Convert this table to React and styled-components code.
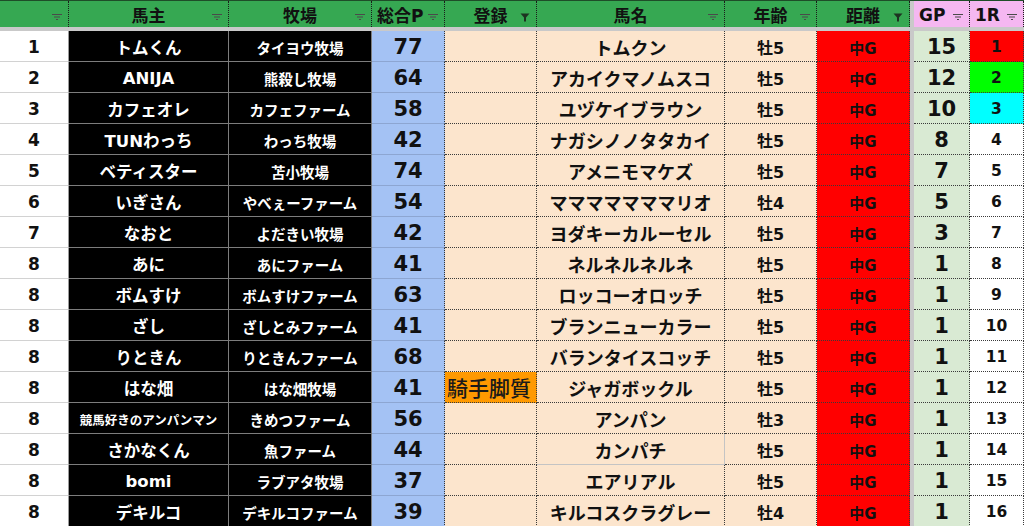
import React from "react";
import styled, { createGlobalStyle } from "styled-components";

const GlobalStyle = createGlobalStyle`
  html, body {
    margin: 0;
    padding: 0;
    background: #ffffff;
  }
  body {
    font-family: "DejaVu Sans", "Noto Sans CJK JP", sans-serif;
    overflow: hidden;
  }
`;

const COLS = "69px 160px 143px 73px 92px 188px 92px 93px 4px 56px 54px";

const rows = [
  ["1", "トムくん", "タイヨウ牧場", 77, "", "トムクン", "牡5", 15, 1, "#ff0000"],
  ["2", "ANIJA", "熊殺し牧場", 64, "", "アカイクマノムスコ", "牡5", 12, 2, "#00ff00"],
  ["3", "カフェオレ", "カフェファーム", 58, "", "ユヅケイブラウン", "牡5", 10, 3, "#00ffff"],
  ["4", "TUNわっち", "わっち牧場", 42, "", "ナガシノノタタカイ", "牡5", 8, 4],
  ["5", "ベティスター", "苫小牧場", 74, "", "アメニモマケズ", "牡5", 7, 5],
  ["6", "いぎさん", "やべぇーファーム", 54, "", "マママママママリオ", "牡4", 5, 6],
  ["7", "なおと", "よだきい牧場", 42, "", "ヨダキーカルーセル", "牡5", 3, 7],
  ["8", "あに", "あにファーム", 41, "", "ネルネルネルネ", "牡5", 1, 8],
  ["8", "ボムすけ", "ボムすけファーム", 63, "", "ロッコーオロッチ", "牡5", 1, 9],
  ["8", "ざし", "ざしとみファーム", 41, "", "ブランニューカラー", "牡5", 1, 10],
  ["8", "りときん", "りときんファーム", 68, "", "バランタイスコッチ", "牡5", 1, 11],
  ["8", "はな畑", "はな畑牧場", 41, "騎手脚質", "ジャガボックル", "牡5", 1, 12],
  ["8", "競馬好きのアンパンマン", "きめつファーム", 56, "", "アンパン", "牡3", 1, 13],
  ["8", "さかなくん", "魚ファーム", 44, "", "カンパチ", "牡5", 1, 14],
  ["8", "bomi", "ラブアタ牧場", 37, "", "エアリアル", "牡5", 1, 15],
  ["8", "デキルコ", "デキルコファーム", 39, "", "キルコスクラグレー", "牡4", 1, 16],
];

// 選択中のセル枠（カンパチの行）
const SELECTED_ROW = 13;

const headers = [
  { label: "", filter: "idle" },
  { label: "馬主", filter: "idle" },
  { label: "牧場", filter: "idle" },
  { label: "総合P", filter: "idle", align: "left" },
  { label: "登録", filter: "on" },
  { label: "馬名", filter: "idle" },
  { label: "年齢", filter: "idle" },
  { label: "距離", filter: "on" },
  { sep: true },
  { label: "GP", filter: "idle", pink: true, align: "left" },
  { label: "1R", filter: "idle", pink: true, align: "left" },
];

const Sheet = styled.div`
  width: 1024px;
  height: 526px;
  overflow: hidden;
  border-top: 1px solid #1e4d28;
  box-sizing: border-box;
`;

const HeaderRow = styled.div`
  display: grid;
  grid-template-columns: ${COLS};
  height: 26px;
  border-bottom: 1px solid #111;
  box-sizing: border-box;
`;

const HeadCell = styled.div`
  position: relative;
  display: flex;
  align-items: center;
  justify-content: ${(p) => (p.$align === "left" ? "flex-start" : "center")};
  padding-left: ${(p) => (p.$align === "left" ? "5px" : "0")};
  padding-top: 1px;
  background: ${(p) => (p.$pink ? "#f5b7f1" : "#36a852")};
  border-right: 1px dotted #1b1b1b;
  font-size: 17px;
  font-weight: bold;
  color: #111;
  box-sizing: border-box;
`;

const FilterIcon = styled.svg`
  position: absolute;
  right: 6px;
  top: 11px;
`;

const Freeze = styled.div`
  height: 4px;
  background: #c9c9c9;
`;

const Row = styled.div`
  display: grid;
  grid-template-columns: ${COLS};
  height: 31px;
`;

const Cell = styled.div`
  display: flex;
  align-items: center;
  justify-content: center;
  padding-top: 2px;
  box-sizing: border-box;
  font-weight: bold;
  white-space: nowrap;
  overflow: hidden;
  color: #111;
  border-right: 1px solid #d2d2d2;
  border-bottom: 1px solid #d2d2d2;
`;

const RankCell = styled(Cell)`
  background: #ffffff;
  font-size: 17px;
  border-right-color: #9b9b9b;
`;

const OwnerCell = styled(Cell)`
  background: #000000;
  color: #ffffff;
  font-size: ${(p) => (p.$small ? "12.5px" : "16.5px")};
  border-right-color: #7d7d7d;
  border-bottom-color: #7d7d7d;
`;

const FarmCell = styled(OwnerCell)`
  font-size: 14.5px;
`;

const PointCell = styled(Cell)`
  background: #a4c2f4;
  font-size: 21px;
  border-bottom-color: #8da6d2;
  border-right: 1px dotted #333;
`;

const DotCell = styled(Cell)`
  background: ${(p) => p.$bg || "#fce5cd"};
  font-size: ${(p) => p.$size || "15px"};
  border-right: 1px ${(p) => (p.$plain ? "solid #c4c4c4" : "dotted #3a3a3a")};
  border-bottom: 1px ${(p) => (p.$plain ? "solid #c4c4c4" : "dotted #3a3a3a")};
`;

const EntryCell = styled(DotCell)`
  justify-content: flex-start;
  padding-left: 2px;
  padding-top: 0;
  font-size: 21px;
  font-weight: 500;
  color: #1a1a1a;
`;

const SepCell = styled.div`
  background: #c9c9c9;
`;

const FilterGlyph = ({ on }) =>
  on ? (
    <FilterIcon width="10" height="10" viewBox="0 0 10 10">
      <path d="M0.5 1.5H9.5L6 5.5V9.5H4V5.5Z" fill="#1d3321" />
    </FilterIcon>
  ) : (
    <FilterIcon width="10" height="10" viewBox="0 0 10 10">
      <path d="M0 2.5H10M2 5H8M4 7.5H6" stroke="#4a4a4a" strokeWidth="1.2" />
    </FilterIcon>
  );

export default function App() {
  return (
    <>
      <GlobalStyle />
      <Sheet>
        <HeaderRow>
          {headers.map((h, i) =>
            h.sep ? (
              <SepCell key={i} />
            ) : (
              <HeadCell key={i} $pink={h.pink} $align={h.align}>
                {h.label}
                <FilterGlyph on={h.filter === "on"} />
              </HeadCell>
            )
          )}
        </HeaderRow>
        <Freeze />
        {rows.map((r, i) => {
          const sel = i === SELECTED_ROW;
          return (
            <Row key={i}>
              <RankCell>{r[0]}</RankCell>
              <OwnerCell $small={r[1].length > 8}>{r[1]}</OwnerCell>
              <FarmCell>{r[2]}</FarmCell>
              <PointCell>{r[3]}</PointCell>
              {r[4] ? (
                <EntryCell $bg="#ff9900">{r[4]}</EntryCell>
              ) : (
                <DotCell />
              )}
              <DotCell $size="18px" $plain={sel}>
                {r[5]}
              </DotCell>
              <DotCell $size="16px">{r[6]}</DotCell>
              <DotCell $bg="#ff0000" $size="15px">
                中G
              </DotCell>
              <SepCell />
              <DotCell $bg="#d9ead3" $size="21px">
                {r[7]}
              </DotCell>
              <DotCell $bg={r[9] || "#ffffff"} $size="15.5px">
                {r[8]}
              </DotCell>
            </Row>
          );
        })}
      </Sheet>
    </>
  );
}
